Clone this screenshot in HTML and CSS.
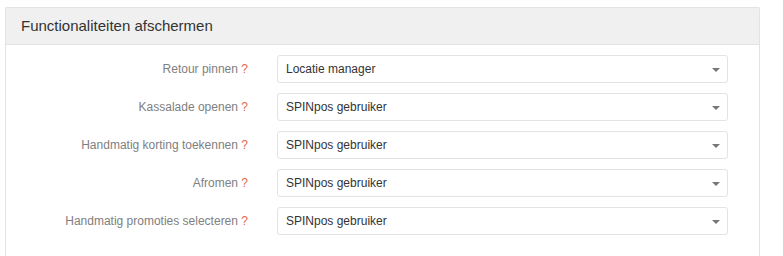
FILE: index.html
```html
<!DOCTYPE html>
<html lang="nl">
<head>
  <meta charset="utf-8">
  <title>Functionaliteiten afschermen</title>
  <link rel="stylesheet" href="styles.css">
</head>
<body>
  <div class="panel">
    <div class="panel-heading">Functionaliteiten afschermen</div>
    <div class="panel-body">
      <div class="form-row">
        <label class="form-label">Retour pinnen <span class="help">?</span></label>
        <div class="select-box">Locatie manager<span class="caret"></span></div>
      </div>
      <div class="form-row">
        <label class="form-label">Kassalade openen <span class="help">?</span></label>
        <div class="select-box">SPINpos gebruiker<span class="caret"></span></div>
      </div>
      <div class="form-row">
        <label class="form-label">Handmatig korting toekennen <span class="help">?</span></label>
        <div class="select-box">SPINpos gebruiker<span class="caret"></span></div>
      </div>
      <div class="form-row">
        <label class="form-label">Afromen <span class="help">?</span></label>
        <div class="select-box">SPINpos gebruiker<span class="caret"></span></div>
      </div>
      <div class="form-row">
        <label class="form-label">Handmatig promoties selecteren <span class="help">?</span></label>
        <div class="select-box">SPINpos gebruiker<span class="caret"></span></div>
      </div>
    </div>
  </div>
</body>
</html>
```
FILE: styles.css
```css
body{
  margin: 0;
  background: #fff;
  font-family: "Liberation Sans", Arial, sans-serif;
  color: #333;
}
.panel{
  margin: 7px 0 0 5px;
  width: 753px;
  height: 260px;
  border: 1px solid #e3e3e3;
  border-bottom: none;
  border-radius: 2px 2px 0 0;
}
.panel-heading{
  height: 36px;
  line-height: 36px;
  padding-left: 15px;
  background: #f0f0f0;
  border-bottom: 1px solid #e3e3e3;
  font-size: 15px;
  color: #333;
}
.panel-body{
  padding-top: 10px;
  display: flex;
  flex-direction: column;
  gap: 10px;
}
.form-row{
  display: grid;
  grid-template-columns: 242px 451px;
  column-gap: 29px;
  align-items: center;
}
.form-label{
  text-align: right;
  font-size: 12px;
  color: #808080;
}
.help{
  color: #e06a4c;
}
.select-box{
  position: relative;
  height: 26px;
  line-height: 26px;
  padding-left: 8px;
  border: 1px solid #e3e3e3;
  border-radius: 3px;
  font-size: 12px;
  color: #333;
}
.caret{
  position: absolute;
  right: 7px;
  top: 12px;
  width: 0;
  height: 0;
  border-left: 4px solid transparent;
  border-right: 4px solid transparent;
  border-top: 4px solid #777;
}
```
